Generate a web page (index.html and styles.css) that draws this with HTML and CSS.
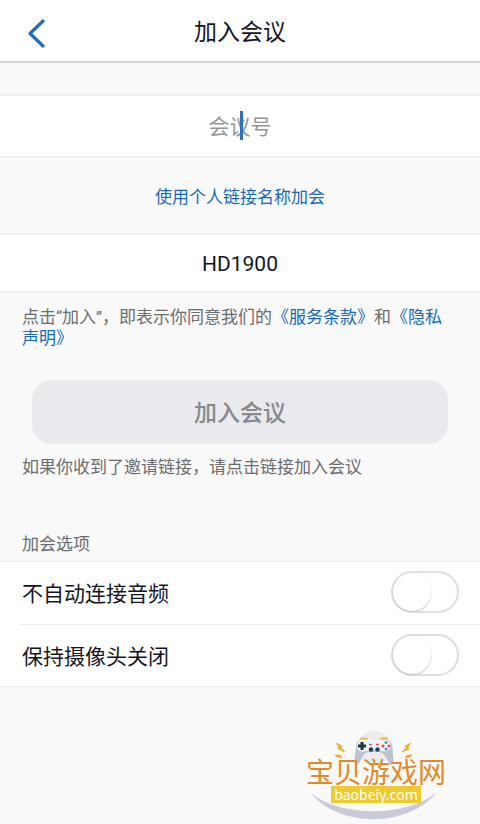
FILE: index.html
```html
<!DOCTYPE html>
<html lang="zh-CN">
<head>
<meta charset="utf-8">
<meta name="viewport" content="width=device-width, initial-scale=1">
<title>加入会议</title>
<link rel="stylesheet" href="styles.css">
</head>
<body>
<div class="page">
  <header class="topbar">
    <button class="back" type="button" aria-label="返回">
      <svg width="20" height="32" viewBox="0 0 20 32" aria-hidden="true"><path d="M15 4 2 16.500 15 29" fill="none" stroke="#1f6cc0" stroke-width="3.200" stroke-linecap="round" stroke-linejoin="round"/></svg>
    </button>
    <h1 class="title">加入会议</h1>
  </header>
  <form class="form">
    <div class="field field-id">
      <input class="input" type="text" placeholder="会议号" aria-label="会议号">
      <span class="caret"></span>
    </div>
    <div class="switch-mode"><a class="link" href="#name">使用个人链接名称加会</a></div>
    <div class="field">
      <input class="input" type="text" value="HD1900" aria-label="名称">
    </div>
    <p class="note terms">点击“加入”，即表示你同意我们的<a class="link" href="#terms">《服务条款》</a>和<a class="link" href="#privacy">《隐私声明》</a></p>
    <button class="join" type="submit" disabled>加入会议</button>
    <p class="note">如果你收到了邀请链接，请点击链接加入会议</p>
    <h2 class="note section">加会选项</h2>
    <div class="options">
      <label class="option"><span>不自动连接音频</span><input class="toggle" type="checkbox" role="switch"></label>
      <label class="option"><span>保持摄像头关闭</span><input class="toggle" type="checkbox" role="switch"></label>
    </div>
  </form>
  <div class="brand">
    <svg class="brand-art" width="144" height="92" viewBox="304 730 144 92" aria-hidden="true">
      <circle cx="374.500" cy="748" r="17" fill="#ececee"/>
      <path d="M311 793C340 817 407 818 437 792C409 828 338 828 311 793Z" fill="#c9cbd9"/>
      <path d="M361 738.500h6M381 738.500h6" stroke="#efb454" stroke-width="2" stroke-linecap="round"/>
      <path d="M360 740H388Q392 741 392.500 748L393.500 761Q391 768 388 761Q384 753 380 752H368Q363 753 360 762Q356 767 354.500 760L356 747Q356 741 360 740Z" fill="#bfc1d0"/>
      <path d="M361 740H387Q391 742 391 747Q389 752 382 751L374 750L366 751Q358 753 357 747Q357 741 361 740Z" fill="#f2f3f8"/>
      <path d="M362 742v8M358 746h8" stroke="#173747" stroke-width="3"/>
      <circle cx="371" cy="749.500" r="2.200" fill="#1d4155"/><circle cx="377.500" cy="749.500" r="2.200" fill="#1d4155"/>
      <path d="M369 744.500h3M376 744.500h3" stroke="#dc5265" stroke-width="1.500"/>
      <circle cx="386" cy="742.500" r="1.500" fill="#38a6b7"/><circle cx="386" cy="749" r="1.500" fill="#38a6b7"/>
      <circle cx="383" cy="746" r="1.500" fill="#df4859"/><circle cx="389" cy="746" r="1.500" fill="#df4859"/>
      <path d="M336 743 342 746 341 748 345 752 338 749 339 747ZM335 755 340 755 342 758 337 757ZM411 743 405 746 406 748 402 752 409 749 408 747ZM412 755 407 755 405 758 410 757Z" fill="#f6b51b" stroke="#e99a22" stroke-width=".600"/>
    </svg>
    <span class="brand-name">宝贝游戏网</span>
    <span class="brand-url">baobeiy.com</span>
  </div>
</div>
</body>
</html>
```
FILE: styles.css
```css
* { box-sizing: border-box; }
body {
  margin: 0;
  background: #f9f9f9;
  color: #14141f;
  font-family: Roboto, "Noto Sans CJK SC", sans-serif;
}
.page { position: relative; min-height: 100vh; }
.topbar {
  display: grid;
  grid-template-columns: 48px 1fr 48px;
  align-items: center;
  height: 63px;
  padding-top: 4px;
  background: #fff;
  border-bottom: 2px solid #d6d6d6;
}
.back {
  display: flex;
  justify-content: flex-end;
  padding: 0;
  border: 0;
  background: none;
}
.title {
  margin: 0;
  text-align: center;
  font-size: 23px;
  font-weight: 400;
  line-height: 32px;
}
.form { padding-top: 31px; }
.field {
  position: relative;
  height: 60px;
  background: #fff;
  border-top: 2px solid #f0f0f4;
  border-bottom: 2px solid #f0f0f4;
}
.field-id { height: 64px; }
.input {
  display: block;
  width: 100%;
  height: 100%;
  padding: 2px 0 0;
  border: 0;
  outline: 0;
  background: none;
  color: inherit;
  font: inherit;
  font-size: 21px;
  text-align: center;
}
.input::placeholder { color: #949496; opacity: 1; }
.caret {
  position: absolute;
  top: 15px;
  left: 50%;
  width: 3px;
  height: 29px;
  background: #2d73bd;
}
.switch-mode {
  display: flex;
  align-items: center;
  justify-content: center;
  height: 75px;
  font-size: 17px;
}
.link { color: #1769b5; text-decoration: none; }
.note {
  margin: 0;
  padding: 0 22px;
  color: #6c6c70;
  font-size: 17px;
  font-weight: 400;
  line-height: 21px;
}
.terms { padding-top: 14px; padding-bottom: 31px; }
.join {
  display: block;
  width: calc(100% - 64px);
  height: 64px;
  margin: 0 32px 13px;
  padding: 0 0 2px;
  border: 0;
  border-radius: 20px;
  background: #e9e9ee;
  color: #88888d;
  font: inherit;
  font-size: 23px;
  font-weight: 500;
}
.section { padding-top: 56px; padding-bottom: 6px; }
.options {
  background: #fff;
  border-top: 1px solid #ebebf0;
  border-bottom: 1px solid #ebebf0;
}
.option {
  display: flex;
  align-items: center;
  justify-content: space-between;
  height: 62px;
  margin-left: 20px;
  padding: 0 21px 2px 2px;
  font-size: 21px;
}
.option + .option { border-top: 1px solid #ebebf0; }
.toggle {
  appearance: none;
  width: 68px;
  height: 42px;
  margin: 0;
  border: 2px solid #dedede;
  border-radius: 21px;
  background: #fff;
}
.toggle::before {
  content: "";
  display: block;
  width: 38px;
  height: 38px;
  border-radius: 50%;
  background: #fff;
  box-shadow: 0 1px 2px #c4c4c4;
}
.toggle:checked { background: #1769b5; }
.toggle:checked::before { margin-left: auto; }
.brand {
  position: absolute;
  right: 32px;
  bottom: 2px;
  display: flex;
  flex-direction: column;
  align-items: center;
  width: 144px;
  height: 92px;
  padding-top: 32px;
}
.brand-art { position: absolute; top: 0; left: 0; }
.brand-name {
  position: relative;
  color: #e28a2b;
  font-size: 28px;
  font-weight: 400;
  line-height: 24px;
  white-space: nowrap;
}
.brand-url {
  position: relative;
  padding: 0 3px;
  background: #ecca31;
  color: #fff;
  font-family: "Noto Sans", sans-serif;
  font-size: 14px;
  font-weight: 400;
  line-height: 17px;
}
```
